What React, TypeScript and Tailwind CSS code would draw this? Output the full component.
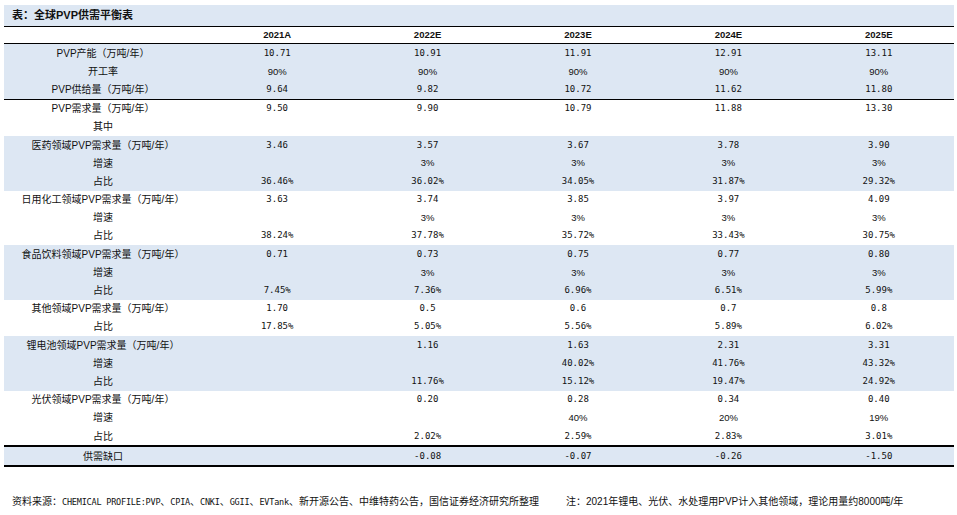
const CJK = "font-['Liberation_Sans','Noto_Sans_CJK_SC',sans-serif]";
const MONO = "font-['DejaVu_Sans_Mono','Liberation_Mono',monospace]";

type Row = { label: string; values: string[] };
type Group = { blue: boolean; rows: Row[] };

const YEARS = ['2021A', '2022E', '2023E', '2024E', '2025E'];

const GROUPS: Group[] = [
  {
    blue: true,
    rows: [
      { label: 'PVP产能（万吨/年）', values: ['10.71', '10.91', '11.91', '12.91', '13.11'] },
      { label: '开工率', values: ['90%', '90%', '90%', '90%', '90%'] },
      { label: 'PVP供给量（万吨/年）', values: ['9.64', '9.82', '10.72', '11.62', '11.80'] },
    ],
  },
  {
    blue: false,
    rows: [
      { label: 'PVP需求量（万吨/年）', values: ['9.50', '9.90', '10.79', '11.88', '13.30'] },
      { label: '其中', values: ['', '', '', '', ''] },
    ],
  },
  {
    blue: true,
    rows: [
      { label: '医药领域PVP需求量（万吨/年）', values: ['3.46', '3.57', '3.67', '3.78', '3.90'] },
      { label: '增速', values: ['', '3%', '3%', '3%', '3%'] },
      { label: '占比', values: ['36.46%', '36.02%', '34.05%', '31.87%', '29.32%'] },
    ],
  },
  {
    blue: false,
    rows: [
      { label: '日用化工领域PVP需求量（万吨/年）', values: ['3.63', '3.74', '3.85', '3.97', '4.09'] },
      { label: '增速', values: ['', '3%', '3%', '3%', '3%'] },
      { label: '占比', values: ['38.24%', '37.78%', '35.72%', '33.43%', '30.75%'] },
    ],
  },
  {
    blue: true,
    rows: [
      { label: '食品饮料领域PVP需求量（万吨/年）', values: ['0.71', '0.73', '0.75', '0.77', '0.80'] },
      { label: '增速', values: ['', '3%', '3%', '3%', '3%'] },
      { label: '占比', values: ['7.45%', '7.36%', '6.96%', '6.51%', '5.99%'] },
    ],
  },
  {
    blue: false,
    rows: [
      { label: '其他领域PVP需求量（万吨/年）', values: ['1.70', '0.5', '0.6', '0.7', '0.8'] },
      { label: '占比', values: ['17.85%', '5.05%', '5.56%', '5.89%', '6.02%'] },
    ],
  },
  {
    blue: true,
    rows: [
      { label: '锂电池领域PVP需求量（万吨/年）', values: ['', '1.16', '1.63', '2.31', '3.31'] },
      { label: '增速', values: ['', '', '40.02%', '41.76%', '43.32%'] },
      { label: '占比', values: ['', '11.76%', '15.12%', '19.47%', '24.92%'] },
    ],
  },
  {
    blue: false,
    rows: [
      { label: '光伏领域PVP需求量（万吨/年）', values: ['', '0.20', '0.28', '0.34', '0.40'] },
      { label: '增速', values: ['', '', '40%', '20%', '19%'] },
      { label: '占比', values: ['', '2.02%', '2.59%', '2.83%', '3.01%'] },
    ],
  },
];

// whole-number percentages render in a proportional face, decimals in a fixed-width one
function Value({ v }: { v: string }) {
  if (/^\d+%$/.test(v)) {
    return <span className="font-['Liberation_Sans',sans-serif] text-[9.5px]">{v}</span>;
  }
  return <span className={`${MONO} text-[9px]`}>{v}</span>;
}

function TableRow({ row }: { row: Row }) {
  return (
    <div className="grid h-[18.2px] grid-cols-[198px_repeat(5,1fr)] text-[10px] leading-none">
      <div className={`${CJK} flex h-full items-center justify-center pt-px`}>{row.label}</div>
      {row.values.map((v, i) => (
        <div key={i} className="flex h-full items-center justify-center">
          {v && <Value v={v} />}
        </div>
      ))}
    </div>
  );
}

function Mono({ children }: { children: string }) {
  return <span className={`${MONO} text-[8.5px] tracking-[-0.2px]`}>{children}</span>;
}

export default function App() {
  return (
    <div className="h-[515px] w-[957px] bg-white pt-[5px] text-[#111]">
      <div className="ml-[4px] w-[950px]">
        <div className="flex h-[21px] items-center bg-[#dde7f3] pl-[8px]">
          <span className={`${CJK} text-[11px] font-bold`}>表：全球PVP供需平衡表</span>
        </div>
        <div className="h-px bg-black" />
        <div className="grid h-[16px] grid-cols-[198px_repeat(5,1fr)] items-center">
          <div />
          {YEARS.map((y) => (
            <div key={y} className="text-center font-['Liberation_Sans',sans-serif] text-[9.5px] font-bold">
              {y}
            </div>
          ))}
        </div>
        <div className="h-px bg-black" />

        {GROUPS.map((g, gi) => (
          <div key={gi}>
            <div className={g.blue ? 'bg-[#dde7f3]' : 'bg-white'}>
              {g.rows.map((r, ri) => (
                <TableRow key={ri} row={r} />
              ))}
            </div>
            {gi === 0 && <div className="h-px bg-black" />}
          </div>
        ))}

        <div className="h-[2px] bg-black" />
        <div className="bg-[#dde7f3]">
          <TableRow row={{ label: '供需缺口', values: ['', '-0.08', '-0.07', '-0.26', '-1.50'] }} />
        </div>
        <div className="h-[2px] bg-black" />

        <div className={`${CJK} mt-[27px] flex text-[10px]`}>
          <div className="w-[562px] pl-[8px]">
            资料来源：<Mono>CHEMICAL PROFILE:PVP</Mono>、<Mono>CPIA</Mono>、<Mono>CNKI</Mono>、
            <Mono>GGII</Mono>、<Mono>EVTank</Mono>、新开源公告、中维特药公告，国信证券经济研究所整理
          </div>
          <div>注：2021年锂电、光伏、水处理用PVP计入其他领域，理论用量约8000吨/年</div>
        </div>
      </div>
    </div>
  );
}
